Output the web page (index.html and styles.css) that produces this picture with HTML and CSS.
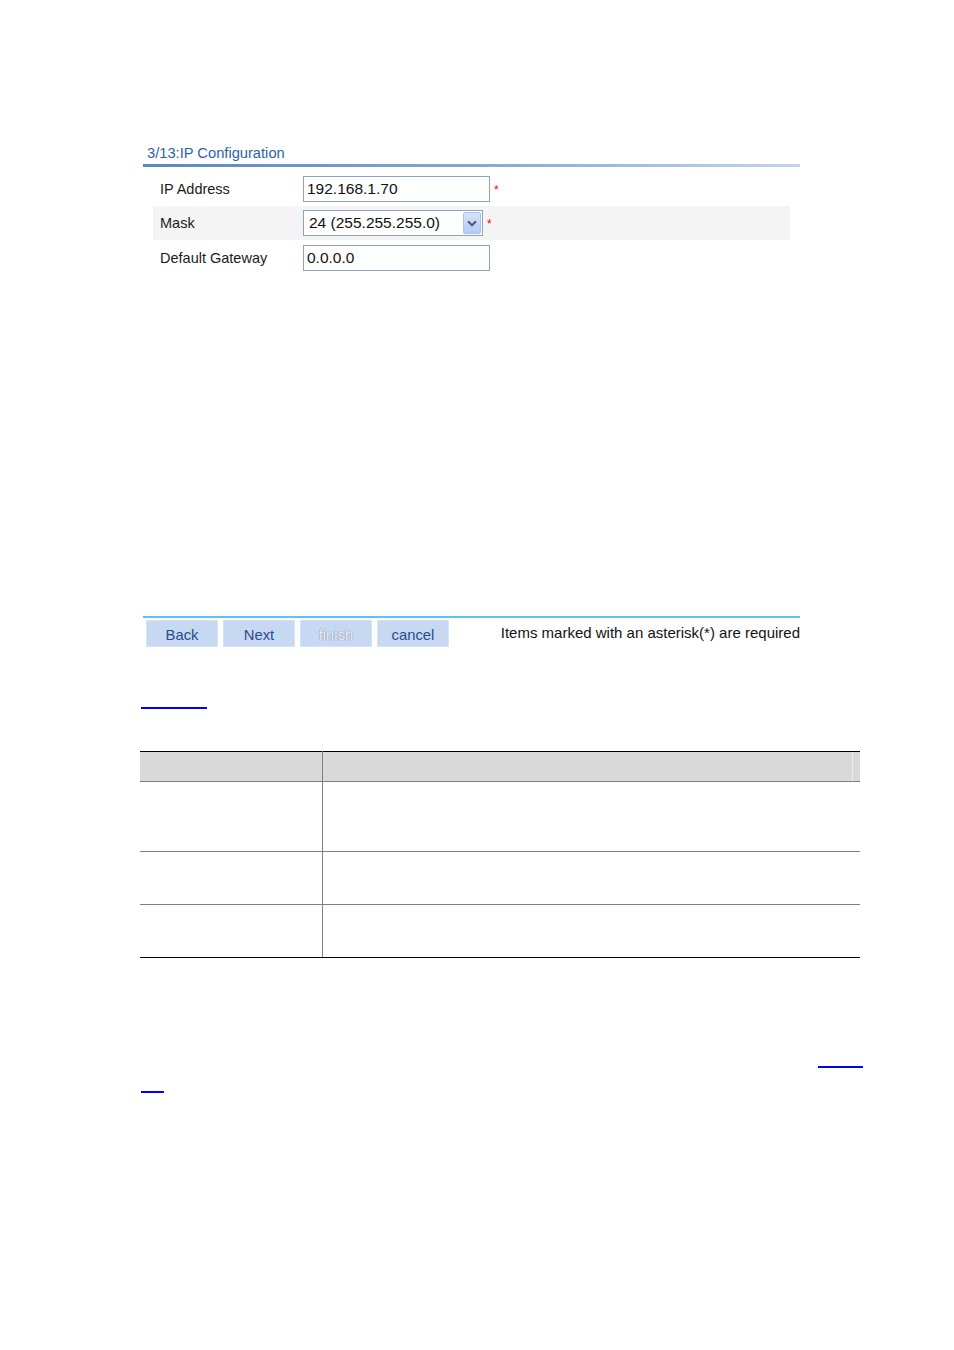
FILE: index.html
```html
<!DOCTYPE html>
<html>
<head>
<meta charset="utf-8">
<link rel="stylesheet" href="styles.css">
</head>
<body>
<div class="doc">
  <div class="wizard">
    <div class="title">3/13:IP Configuration</div>
    <div class="title-rule"></div>
    <div class="form">
      <div class="row">
        <div class="label">IP Address</div>
        <div class="field"><div class="input">192.168.1.70</div><span class="req">*</span></div>
      </div>
      <div class="row alt">
        <div class="label">Mask</div>
        <div class="field">
          <div class="select"><span class="select-text">24 (255.255.255.0)</span>
            <span class="drop"><svg width="10" height="7" viewBox="0 0 10 7"><path d="M1 1.2 L5 5.2 L9 1.2" fill="none" stroke="#4a5c7c" stroke-width="2.2"/></svg></span>
          </div><span class="req">*</span>
        </div>
      </div>
      <div class="row">
        <div class="label">Default Gateway</div>
        <div class="field"><div class="input">0.0.0.0</div></div>
      </div>
    </div>
    <div class="footer">
      <div class="footer-rule"></div>
      <div class="footer-bar">
        <div class="buttons">
          <div class="btn">Back</div>
          <div class="btn">Next</div>
          <div class="btn disabled">finish</div>
          <div class="btn">cancel</div>
        </div>
        <div class="note">Items marked with an asterisk(*) are required</div>
      </div>
    </div>
  </div>
  <div class="link-line first"><span class="link l1"></span></div>
  <table class="grid">
    <tr class="head"><th class="c1"></th><th class="c2"><span class="head-end"></span></th></tr>
    <tr class="r1"><td class="c1"></td><td class="c2"></td></tr>
    <tr class="r2"><td class="c1"></td><td class="c2"></td></tr>
    <tr class="r3"><td class="c1"></td><td class="c2"></td></tr>
  </table>
  <div class="link-line right"><span class="link l2"></span></div>
  <div class="link-line second"><span class="link l3"></span></div>
</div>
</body>
</html>
```

FILE: styles.css
```css
html, body {
  margin: 0;
  padding: 0;
  background: #ffffff;
}
body {
  font-family: "Liberation Sans", Arial, sans-serif;
  color: #111111;
}
.doc {
  padding-left: 140px;
  width: 723px;
}
.wizard {
  margin-left: 3px;
  width: 657px;
  padding-top: 144px;
}
.title {
  font-size: 14.7px;
  line-height: 18px;
  color: #2d63a6;
  padding-left: 4px;
  padding-bottom: 2px;
}
.title-rule {
  height: 3px;
  background: linear-gradient(to right, #5b87bd 0%, #86a6cf 50%, #c3d5ea 100%);
}
.form {
  margin: 4px 0 0 10px;
  width: 637px;
}
.row {
  display: flex;
  align-items: center;
  height: 35px;
}
.row.alt {
  height: 34px;
  background: #f4f4f4;
}
.label {
  width: 143px;
  padding-left: 7px;
  font-size: 14.5px;
  color: #1a1a1a;
}
.field {
  display: flex;
  align-items: center;
}
.input {
  box-sizing: border-box;
  width: 187px;
  height: 26px;
  border: 1px solid #8ba4c4;
  padding-left: 3px;
  font-size: 15.5px;
  line-height: 24px;
  color: #111;
  background: #fff;
}
.select {
  box-sizing: border-box;
  width: 180px;
  height: 26px;
  border: 1px solid #8ba4c4;
  display: flex;
  align-items: center;
  justify-content: space-between;
  padding: 1px 1px 1px 5px;
  background: #fff;
}
.select-text {
  font-size: 15.5px;
  color: #111;
}
.drop {
  box-sizing: border-box;
  width: 18px;
  height: 22px;
  border: 1px solid #aac0e8;
  border-radius: 2px;
  background: linear-gradient(#d6e3fb, #b5caf4);
  display: flex;
  align-items: center;
  justify-content: center;
}
.req {
  color: #ff0000;
  font-size: 12px;
  margin-left: 4px;
  line-height: 12px;
  padding-top: 2px;
}
.footer {
  margin-top: 341px;
}
.footer-rule {
  height: 2px;
  background: #5cc1f6;
}
.footer-bar {
  display: flex;
  justify-content: space-between;
  margin-top: 2px;
}
.buttons {
  display: flex;
  gap: 5px;
  margin-left: 3px;
}
.btn {
  box-sizing: border-box;
  width: 72px;
  height: 27px;
  background: #c7d8f2;
  border: 1px solid #d6e2f5;
  color: #2b4a8a;
  font-size: 14.8px;
  line-height: 25px;
  text-align: center;
  padding-top: 2px;
}
.btn.disabled {
  color: #eef2f8;
  text-shadow: 0 0 1px #7f8aa0, 0 0 1px #7f8aa0;
}
.note {
  font-size: 15px;
  color: #111;
  line-height: 18px;
  padding-top: 4px;
}
.link-line {
  display: flex;
  height: 2px;
}
.link-line.first {
  margin-top: 60px;
}
.link-line.right {
  justify-content: flex-end;
  margin-top: 108px;
}
.link-line.second {
  margin-top: 23px;
}
.link {
  display: block;
  height: 1.5px;
  background: #0000ff;
}
.l1 {
  width: 66px;
  margin-left: 1px;
}
.l2 {
  width: 45px;
}
.l3 {
  width: 23px;
  margin-left: 1px;
}
.grid {
  border-collapse: collapse;
  width: 720px;
  margin-top: 42px;
  table-layout: fixed;
}
.grid th, .grid td {
  padding: 0;
}
.grid .c1 {
  width: 182px;
  border-right: 1px solid #808080;
}
.grid .head th {
  height: 29px;
  background: #d9d9d9;
  border-top: 1px solid #000;
  border-bottom: 1px solid #808080;
  position: relative;
}
.head-end {
  position: absolute;
  right: 7px;
  top: 0;
  bottom: 0;
  width: 1px;
  background: #ececec;
}
.grid .r1 td {
  height: 69px;
  border-bottom: 1px solid #808080;
}
.grid .r2 td {
  height: 52px;
  border-bottom: 1px solid #808080;
}
.grid .r3 td {
  height: 52px;
  border-bottom: 1px solid #000;
}
```
